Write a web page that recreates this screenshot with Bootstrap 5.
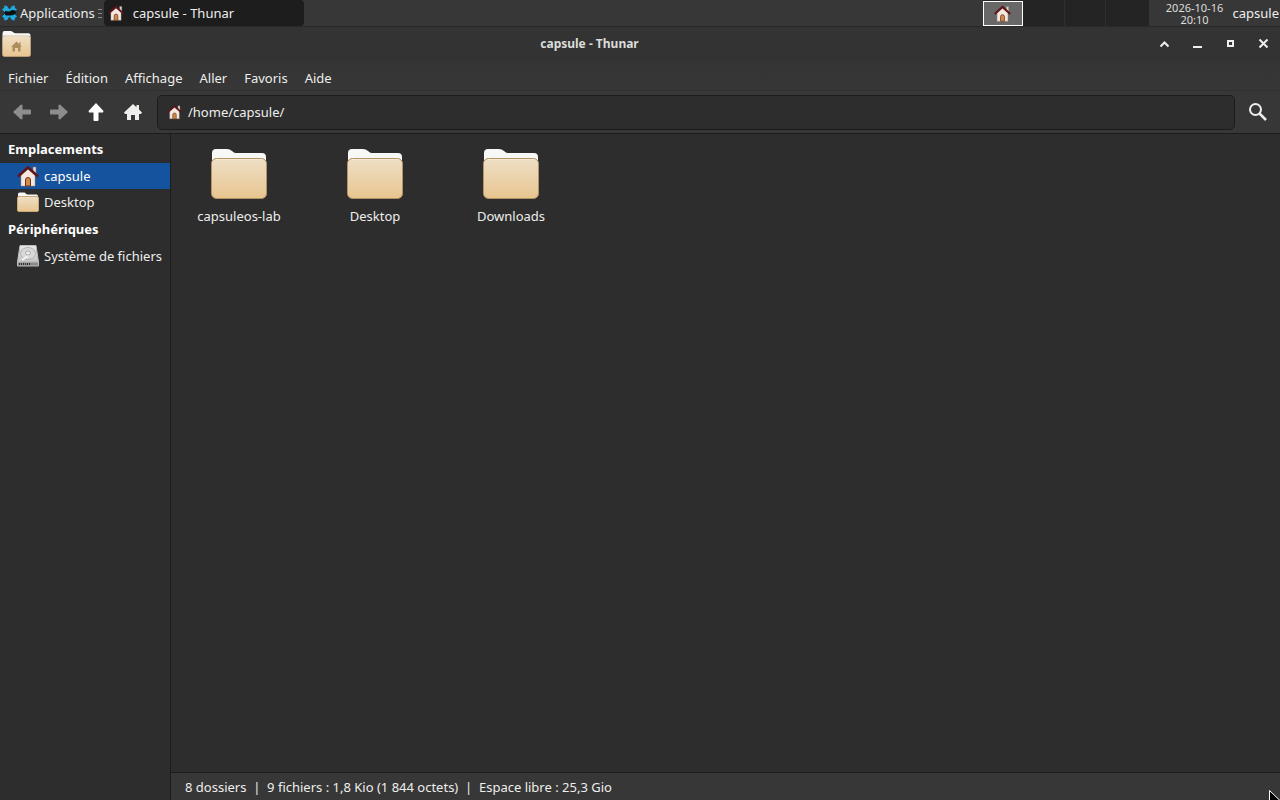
<!DOCTYPE html>
<html lang="fr" data-bs-theme="dark">
<head>
<meta charset="utf-8">
<meta name="viewport" content="width=device-width, initial-scale=1">
<title>capsule - Thunar</title>
<link href="https://cdn.jsdelivr.net/npm/bootstrap@5.3.0/dist/css/bootstrap.min.css" rel="stylesheet">
<style>
  body { font: 13px/18px "Noto Sans", sans-serif; color: #eeeeec; background: #2d2d2d; cursor: default; }
  svg { display: block; flex: none; }
  button, .plain-link { background: none; border: 0; padding: 0; color: inherit; text-decoration: none; }
  .desk-panel { height: 27px; background: #373737; border-bottom: 1px solid #282828; }
  .apps { padding-left: 2px; gap: 3px; }
  .grip { width: 4px; height: 9px; margin: 0 2px 0 3px; background: repeating-linear-gradient(#8a8a8a 0 1px, transparent 1px 4px); }
  .task { width: 200px; height: 26px; background: #1d1d1d; border-radius: 4px; padding-left: 4px; gap: 9px; }
  .pager { width: 166px; background: #242424; }
  .space { width: 41px; height: 26px; border-right: 1px solid #303030; }
  .space.current { width: 40px; height: 25px; margin: 1px 1px 0 0; background: #686868; border: 1px solid #fff; }
  .space:last-child { border: 0; }
  .clock { width: 84px; font-size: 11px; line-height: 12px; padding: 2px 0 0 8px; color: #dededc; }
  .user { padding-right: 1px; }
  .titlebar { height: 34px; background: #333; padding-left: 2px; }
  .title { font-size: 12px; font-weight: 700; color: #dcdcda; }
  .menus { height: 30px; background: linear-gradient(#343434, #373737); border-bottom: 1px solid #303030; gap: 17px; padding: 4px 8px 0; }
  .tools { height: 43px; background: #373737; border-bottom: 1px solid #1c1c1c; padding: 0 13px 0 3px; }
  .tool { width: 37px; height: 37px; }
  .pathbox { height: 35px; background: #2d2d2d; border: 1px solid #1c1c1c; border-radius: 5px; margin: 0 14px 0 6px; padding-left: 9px; gap: 6px; }
  .pathbox input { background: none; border: 0; outline: 0; padding: 0; color: inherit; }
  .side { width: 171px; border-right: 1px solid #1c1c1c; padding-top: 1px; }
  .side h2 { font-size: 13px; line-height: 18px; font-weight: 700; margin: 0; padding: 5px 8px 5px; color: #fff; }
  .place { height: 26px; padding-left: 16px; gap: 4px; white-space: nowrap; }
  .place.selected { background: #15539e; color: #fff; }
  .files { padding-top: 15px; }
  .file { width: 136px; gap: 8px; }
  .status { height: 28px; background: #373737; border-top: 1px solid #1c1c1c; padding: 5px 14px 0; white-space: pre; }
  .pointer { right: -2px; bottom: -9px; }
</style>
</head>
<body>
<svg width="0" height="0" class="position-absolute" aria-hidden="true">
  <defs>
    <linearGradient id="tan" x2="0" y2="1"><stop stop-color="#eedfc5"/><stop offset="1" stop-color="#e8c58f"/></linearGradient>
    <linearGradient id="metal" x2="0" y2="1"><stop stop-color="#e8e8e8"/><stop offset="1" stop-color="#c4c4c4"/></linearGradient>
    <symbol id="folder" viewBox="0 0 56 50">
      <path d="M1 14V4Q1 0 5 0H16Q19 0 21 2L23 3.500Q24 4 26 4H51Q55 4 55 8V14Z" fill="#f7f7f6"/>
      <rect x=".5" y="9.500" width="55" height="40" rx="5" fill="url(#tan)" stroke="#b39263"/>
      <path d="M5 10.500H51" stroke="#f6ead5"/>
    </symbol>
    <symbol id="smallfolder" viewBox="0 0 22 20">
      <path d="M1 7V2Q1 .5 2.500 .5H7.500L10 2.500H19.500Q21 2.500 21 4V7Z" fill="#f7f7f6"/>
      <rect x=".5" y="4.500" width="21" height="15" rx="1.500" fill="url(#tan)" stroke="#c9aa78"/>
    </symbol>
    <symbol id="house" viewBox="0 0 22 22">
      <path d="M16 2h3v8h-3z" fill="#ddd3cb" stroke="#8c7b73" stroke-width=".5"/>
      <path d="M4 10L11 4L18 10V21H4Z" fill="#f6e8df" stroke="#a6958b" stroke-width=".5"/>
      <path d="M8.500 21V15a2.500 2.500 0 0 1 5 0V21Z" fill="#cf8a50" stroke="#6d3413"/>
      <path d="M1 11.500L11 2.500L21 11.500" fill="none" stroke="#5d161b" stroke-width="2.600"/>
    </symbol>
    <symbol id="home" viewBox="0 0 18 16">
      <path d="M9 0L0 8.500L1 10H3V16H7V11H11V16H15V10H17L18 8.500L15 5.600V1H12.500V3.300Z" fill="currentColor"/>
    </symbol>
    <symbol id="arrow" viewBox="0 0 18 16">
      <path d="M0 8L8 .5L9.500 1V5.500H17Q18 5.500 18 6.500V9.500Q18 10.500 17 10.500H9.500V15L8 15.500Z" fill="currentColor"/>
    </symbol>
  </defs>
</svg>

<div class="d-flex flex-column vh-100 overflow-hidden position-relative">
  <header class="desk-panel d-flex flex-shrink-0">
    <button class="apps d-flex align-items-center">
      <svg width="15" height="16" viewBox="0 0 15 16"><path d="M2.500 .5L5 1L7.500 4.500L10 1L12.500 .5L13 3L15 4.500L11.500 8L15 11.500L13 13L12.500 15.500L10 15L7.500 11.500L5 15L2.500 15.500L2 13L0 11.500L3.500 8L0 4.500L2 3Z" fill="#22aade"/><path d="M3 6L7 6.500L10 5L13.500 5.500L14 8L11.500 10L8 10.500L4 10.500L2.500 9Z" fill="#0d1114"/></svg>
      <span>Applications</span>
    </button>
    <span class="grip align-self-center"></span>
    <button class="task d-flex align-items-center"><svg width="16" height="16"><use href="#house"/></svg><span>capsule - Thunar</span></button>
    <div class="pager d-flex ms-auto">
      <span class="space current d-flex align-items-center justify-content-center"><svg width="17" height="17"><use href="#house"/></svg></span>
      <span class="space"></span><span class="space"></span><span class="space"></span>
    </div>
    <time class="clock text-center">2026-10-16<br>20:10</time>
    <button class="user">capsule</button>
  </header>

  <div class="titlebar d-flex align-items-center flex-shrink-0">
    <svg width="29" height="26" viewBox="0 0 29 26"><use href="#folder" width="29" height="26"/><path d="M14.500 10.500L9 16H10.500V20.500H13V17H16V20.500H18.500V16H20L18.500 14.500V11.500H17V13Z" fill="#ab8d5e"/></svg>
    <span class="title flex-fill text-center">capsule - Thunar</span>
    <div class="d-flex">
      <button aria-label="Enrouler"><svg width="33" height="14" fill="none" stroke="#eeeeec" stroke-width="2"><path d="M12.500 9.500L16.500 5.500L20.500 9.500"/></svg></button>
      <button aria-label="Réduire"><svg width="33" height="14" stroke="#eeeeec" stroke-width="2"><path d="M12 10H21"/></svg></button>
      <button aria-label="Agrandir"><svg width="33" height="14" fill="none" stroke="#eeeeec" stroke-width="2"><path d="M14 4H19V9H14Z"/></svg></button>
      <button aria-label="Fermer"><svg width="33" height="14" stroke="#eeeeec" stroke-width="2"><path d="M12.500 2.500L20.500 10.500M20.500 2.500L12.500 10.500"/></svg></button>
    </div>
  </div>

  <nav class="menus d-flex align-items-center flex-shrink-0">
    <button>Fichier</button><button>Édition</button><button>Affichage</button><button>Aller</button><button>Favoris</button><button>Aide</button>
  </nav>

  <div class="tools d-flex align-items-center flex-shrink-0">
    <button class="tool d-flex align-items-center justify-content-center" aria-label="Précédent" disabled><svg width="18" height="16" color="#8d8d8c"><use href="#arrow"/></svg></button>
    <button class="tool d-flex align-items-center justify-content-center" aria-label="Suivant" disabled><svg width="18" height="16" viewBox="0 0 18 16" color="#8d8d8c"><use href="#arrow" width="18" height="16" transform="rotate(180 9 8)"/></svg></button>
    <button class="tool d-flex align-items-center justify-content-center" aria-label="Parent"><svg width="16" height="18" viewBox="0 0 16 18" color="#fff"><use href="#arrow" width="18" height="16" transform="translate(16 0) rotate(90)"/></svg></button>
    <button class="tool d-flex align-items-center justify-content-center" aria-label="Dossier personnel"><svg width="18" height="16"><use href="#home"/></svg></button>
    <label class="pathbox d-flex align-items-center flex-fill"><svg width="15" height="16"><use href="#house"/></svg><input class="flex-fill" type="text" value="/home/capsule/" aria-label="Emplacement"></label>
    <button aria-label="Rechercher"><svg width="18" height="18" viewBox="0 0 18 18" fill="none" stroke="#eeeeec"><circle cx="6.500" cy="6.500" r="5.500" stroke-width="2"/><path d="M10.500 10.500L17 17" stroke-width="2.500"/></svg></button>
  </div>

  <div class="d-flex flex-fill">
    <aside class="side flex-shrink-0">
      <h2>Emplacements</h2>
      <a href="#" class="plain-link place selected d-flex align-items-center"><svg width="24" height="22"><use href="#house"/></svg>capsule</a>
      <a href="#" class="plain-link place d-flex align-items-center"><svg width="24" height="20"><use href="#smallfolder"/></svg>Desktop</a>
      <h2>Périphériques</h2>
      <a href="#" class="plain-link place d-flex align-items-center"><svg width="24" height="22" viewBox="0 0 24 22"><path d="M4 .5H20L22.500 17H1.500Z" fill="url(#metal)" stroke="#bbb"/><path d="M1.500 17H22.500V21H1.500Z" fill="#8a8a8a" stroke="#bbb"/><path d="M3 19H15" stroke="#333" stroke-width="2" stroke-dasharray="1 1"/><ellipse cx="12" cy="8.500" rx="7.500" ry="6" fill="#d8d8d8" stroke="#b2b2b2"/><ellipse cx="12" cy="8" rx="2.500" ry="2" fill="#eee" stroke="#aaa"/><path d="M6 15L12 11" stroke="#f5f5f5" stroke-width="2"/></svg>Système de fichiers</a>
    </aside>
    <main class="d-flex flex-column flex-fill">
      <div class="files d-flex flex-wrap align-content-start flex-fill">
        <a href="#" class="plain-link file d-flex flex-column align-items-center"><svg width="56" height="50"><use href="#folder"/></svg>capsuleos-lab</a>
        <a href="#" class="plain-link file d-flex flex-column align-items-center"><svg width="56" height="50"><use href="#folder"/></svg>Desktop</a>
        <a href="#" class="plain-link file d-flex flex-column align-items-center"><svg width="56" height="50"><use href="#folder"/></svg>Downloads</a>
      </div>
      <footer class="status">8 dossiers  |  9 fichiers : 1,8 Kio (1 844 octets)  |  Espace libre : 25,3 Gio</footer>
    </main>
  </div>
  <svg class="pointer position-absolute" width="13" height="19" viewBox="0 0 13 19"><path d="M.5 .5V16L4.500 12.500L7 18L9.500 17L7.500 11.500H12Z" fill="#000" stroke="#fff"/></svg>
</div>
<script src="https://cdn.jsdelivr.net/npm/bootstrap@5.3.0/dist/js/bootstrap.bundle.min.js"></script>
</body>
</html>
